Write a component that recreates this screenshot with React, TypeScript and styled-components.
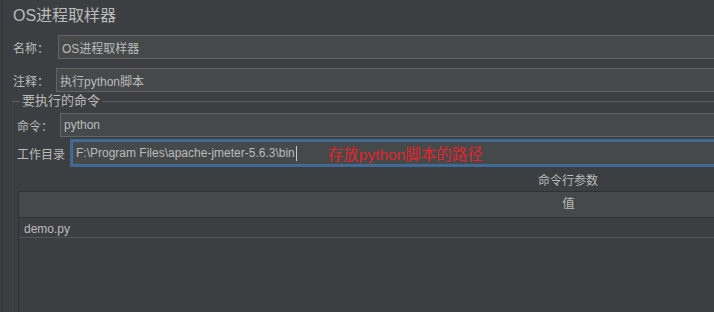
import styled, { createGlobalStyle } from "styled-components";

const GlobalStyle = createGlobalStyle`
  html, body {
    margin: 0;
    padding: 0;
    background: #3c3f41;
    overflow: hidden;
  }
  body {
    font-family: "Liberation Sans", "Noto Sans CJK SC", sans-serif;
    font-size: 12px;
    color: #bbbbbb;
  }
`;

// the panel is wider than the window, the right part is cut off
const Frame = styled.div`
  width: 100vw;
  height: 312px;
  overflow: hidden;
`;

const Page = styled.div`
  width: 1116px;
  height: 312px;
  margin-left: 2px;
  border-left: 1px solid #323436;
  padding-left: 10px;
  box-sizing: border-box;
  display: flex;
  flex-direction: column;
`;

const Title = styled.div`
  height: 32px;
  line-height: 32px;
  font-size: 16px;
  color: #bbbbbb;
`;

const Row = styled.div<{ $top: number }>`
  display: flex;
  align-items: center;
  margin-top: ${(p) => p.$top}px;
  height: 24px;
`;

const Label = styled.div<{ $w: number }>`
  width: ${(p) => p.$w}px;
  flex: none;
  white-space: nowrap;
`;

const Field = styled.div<{ $focus?: boolean }>`
  flex: 1;
  height: 24px;
  box-sizing: border-box;
  background: #45494a;
  border: 1px solid #646464;
  padding-left: 3px;
  display: flex;
  align-items: center;
  white-space: nowrap;
  color: #bbbbbb;
  ${(p) =>
    p.$focus &&
    `
    border-color: #466d94;
    box-shadow: 0 0 0 2px #3f6896;
    margin-left: 2px;
  `}
`;

const Caret = styled.span`
  display: inline-block;
  width: 1px;
  height: 15px;
  background: #c8c8c8;
  margin-left: 1px;
`;

const Note = styled.span`
  color: #e3242b;
  font-size: 15.5px;
  margin-left: 31px;
`;

const Group = styled.fieldset`
  margin: 2px 0 0 -1px;
  padding: 5px 0 0 4px;
  border: none;
  border-top: 1px solid #5b5e60;
  border-left: 1px solid #434648;
  flex: 1;
  min-height: 0;
  display: flex;
  flex-direction: column;
`;

const Legend = styled.legend`
  padding: 0 2px;
  margin-left: 3px;
  line-height: 14px;
  font-size: 13px;
`;

const TableTitle = styled.div`
  height: 26px;
  box-sizing: border-box;
  padding-top: 6px;
  line-height: 20px;
  text-align: center;
  margin-left: 1px;
`;

const Table = styled.div`
  flex: 1;
  margin-left: 1px;
  border-top: 1px solid #2f3133;
  border-left: 1px solid #2f3133;
`;

const HeadCell = styled.div`
  height: 25px;
  line-height: 25px;
  background: #45494a;
  border-bottom: 1px solid #2f3133;
  text-align: center;
  font-size: 12.5px;
`;

const Cell = styled.div`
  height: 19px;
  line-height: 22px;
  padding-left: 5px;
  border-bottom: 1px solid #525557;
`;

export default function App() {
  return (
    <>
      <GlobalStyle />
      <Frame>
        <Page>
          <Title>OS进程取样器</Title>
          <Row $top={3}>
            <Label $w={45}>名称：</Label>
            <Field>OS进程取样器</Field>
          </Row>
          <Row $top={9}>
            <Label $w={43}>注释：</Label>
            <Field>执行python脚本</Field>
          </Row>
          <Group>
            <Legend>要执行的命令</Legend>
            <Row $top={0}>
              <Label $w={43}>命令：</Label>
              <Field>python</Field>
            </Row>
            <Row $top={4}>
              <Label $w={53}>工作目录</Label>
              <Field $focus>
                F:\Program Files\apache-jmeter-5.6.3\bin
                <Caret />
                <Note>存放python脚本的路径</Note>
              </Field>
            </Row>
            <TableTitle>命令行参数</TableTitle>
            <Table>
              <HeadCell>值</HeadCell>
              <Cell>demo.py</Cell>
            </Table>
          </Group>
        </Page>
      </Frame>
    </>
  );
}
